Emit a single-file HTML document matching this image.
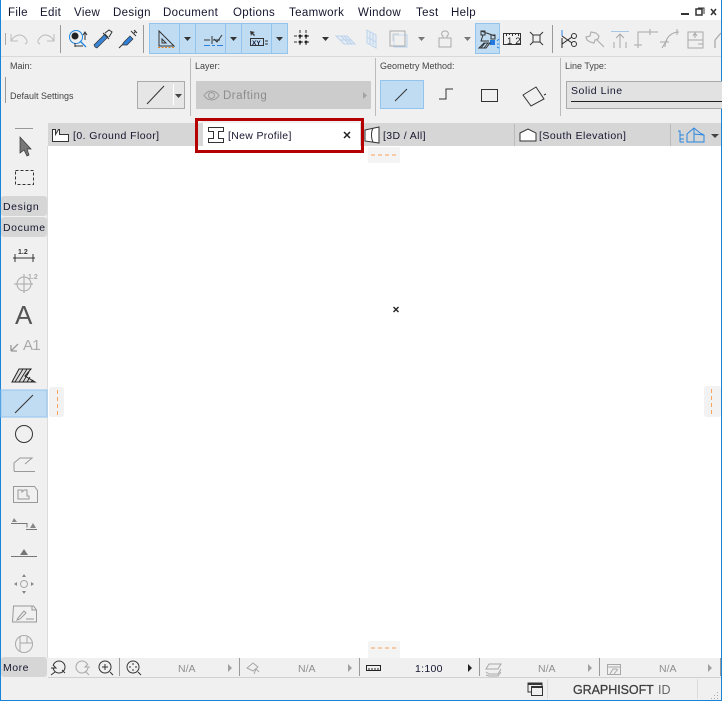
<!DOCTYPE html>
<html><head><meta charset="utf-8"><style>
html,body{margin:0;padding:0;background:#fff}
svg{display:block;position:absolute;left:0;top:0}
text{font-family:"Liberation Sans",sans-serif;font-size:11px;fill:#15152e}
.m{font-size:11.5px;letter-spacing:.35px}
.l{font-size:9px;fill:#444}
.g{fill:#8f8f8f}
.n{stroke:#333;fill:none;stroke-width:1}
.d{stroke:#a8a8a8;fill:none;stroke-width:1}
.b{stroke:#8db8e2;fill:none;stroke-width:1}
.sel{fill:#bfdcf3;stroke:#93c4ee;stroke-width:1}
</style></head><body>
<svg width="722" height="701" viewBox="0 0 722 701" xmlns="http://www.w3.org/2000/svg" shape-rendering="geometricPrecision">
<rect width="722" height="701" fill="#f0f0f0"/>
<rect width="722" height="20" fill="#fff"/>
<rect y="56" width="722" height="1" fill="#d9d9d9"/>
<rect x="48" y="123" width="674" height="23" fill="#d6d6d6"/>
<rect x="48" y="146" width="673" height="512" fill="#fff"/>
<rect x="47" y="146" width="1" height="512" fill="#dcdcdc"/>
<rect x="48" y="677" width="673" height="1" fill="#d0d0d0"/>
<rect x="0" y="0" width="1" height="701" fill="#1883d7"/>
<rect x="721" y="0" width="1" height="701" fill="#1883d7"/>
<rect x="0" y="700" width="722" height="1" fill="#1883d7"/>

<!-- menu -->
<g class="menu">
<text class="m" x="8" y="16">File</text><text class="m" x="40" y="16">Edit</text><text class="m" x="74" y="16">View</text><text class="m" x="113" y="16">Design</text><text class="m" x="163" y="16">Document</text><text class="m" x="233" y="16">Options</text><text class="m" x="289" y="16">Teamwork</text><text class="m" x="358" y="16">Window</text><text class="m" x="416" y="16">Test</text><text class="m" x="451" y="16">Help</text>
</g>
<path d="M681 14h8" stroke="#333" stroke-width="2"/>
<rect x="696" y="9" width="6" height="6" fill="none" stroke="#333" stroke-width="1.500"/><path d="M698 8h6v6" fill="none" stroke="#333"/>
<path d="M711 9l5 6M716 9l-5 6" stroke="#333" stroke-width="1.500"/>

<!-- toolbar -->
<path d="M5.500 33v12" class="d"/>
<path d="M11 34v7h7M11 41c4-7 11-8 15-2 2 3 1 4-1 5" class="d" style="stroke:#bbb"/>
<path d="M54 34v7h-7M54 41c-4-7-11-8-15-2-2 3-1 4 1 5" class="d" style="stroke:#bbb"/>
<rect x="60" y="25" width="1" height="28" fill="#999"/>
<circle cx="75" cy="36" r="3.500" fill="#222"/><circle cx="76" cy="37" r="6.500" fill="none" stroke="#1f86e0"/><path d="M80 41l6 6" stroke="#1f86e0" stroke-width="1.300"/><path d="M85 33v7M83 35l2-3 2 3M75 46h8M75 43v4" class="n"/>
<path d="M95 47l-1-2 11-11 3 3-11 11z" fill="#3a83d4" stroke="#333" stroke-width=".7"/><path d="M105 33l4-3 3 2-3 5M103 33l6 6" class="n"/>
<path d="M122 45l2-3 6-6 3 3-6 6z" fill="#2f7fd6" stroke="#333" stroke-width=".7"/><path d="M119 48l3-3M131 31l5 5M134 30l3 3M136 31l-2 2" class="n"/>
<rect x="143" y="25" width="1" height="28" fill="#999"/>
<rect x="149.500" y="23.500" width="30" height="30" class="sel"/><rect x="179.500" y="23.500" width="16" height="30" class="sel"/>
<rect x="195.500" y="23.500" width="30" height="30" class="sel"/><rect x="225.500" y="23.500" width="16" height="30" class="sel"/>
<rect x="241.500" y="23.500" width="30" height="30" class="sel"/><rect x="271.500" y="23.500" width="16" height="30" class="sel"/>
<path d="M159 31v15h15zM162 39v4h4z" class="n"/><path d="M158 47.500h17" stroke="#e8841f" stroke-dasharray="2 1.500" fill="none"/>
<path d="M204 40h6M213 40h7M212 36v8M214 39l3 3 5-7" class="n"/><path d="M204 45.500h6M212 45.500h3M217 45.500h6" stroke="#2c7fdc" fill="none"/>
<path d="M250 31l5 1-2 1 2 2-1 1-2-2-1 2z" fill="#333"/><rect x="250.500" y="38.500" width="13" height="7" class="n"/><text x="252" y="45" style="font-size:6.500px;font-weight:bold">XY</text><path d="M265 41h3M265 44h3" class="n"/>
<path d="M184 37h7l-3.500 4zM230 37h7l-3.500 4zM276 37h7l-3.500 4zM322 37h7l-3.500 4z" fill="#333"/>
<path d="M300 30v18M294 36h18M294 42h18M306 30v18" stroke="#333" stroke-dasharray="3 3" fill="none"/>
<circle cx="300" cy="36" r="1.500" fill="#222"/><circle cx="306" cy="36" r="1.500" fill="#222"/><circle cx="300" cy="42" r="1.500" fill="#222"/><circle cx="306" cy="42" r="1.500" fill="#222"/>
<path d="M336 36h11l8 8h-11zM341 36l8 8M344 36l8 8M340 40h12" fill="#e6edf5" stroke="#bcd3ec"/>
<path d="M367 30l9 5v13l-9-5zM370 32v12M373 33v12M367 37l9 5" fill="#e6edf5" stroke="#bcd3ec"/>
<rect x="394" y="35" width="13" height="12" fill="none" stroke="#b4d0ef"/>
<rect x="390" y="31" width="15" height="15" fill="#f0f0f0" fill-opacity=".4" stroke="#aaa"/><path d="M393 41v-7h6" stroke="#ccc" fill="none"/>
<path d="M418 37h7l-3.500 4zM464 37h7l-3.500 4z" fill="#777"/>
<path d="M439 38h12v9h-12zM443 38v-2c-2-1-2-5 2-5 4 0 4 4 2 5v2" fill="none" stroke="#aaa"/>
<rect x="475.500" y="23.500" width="24" height="30" class="sel"/>
<path d="M481 31l14 5M481 31h4v4h-4zM491 35h4v4h-4zM483 35l-2 6h8" class="n"/><rect x="490" y="40" width="5" height="5" fill="#2179e0"/><path d="M479 48l5-5h6l-4 5zM481 48l4-5M484 48l4-5" class="n"/><path d="M497 41l2-2M497 44h2M497 47l2 1" stroke="#2d86e0"/>
<path d="M503.500 33.500h17v11h-17zM506.500 33v3M509.500 33v2M512.500 33v3M515.500 33v2M518.500 33v3" class="n"/><text x="507" y="44" style="font-size:9.500px;letter-spacing:3px;fill:#222">12</text>
<path d="M533 35h7v7h-7zM530 32l3 3M543 32l-3 3M530 45l3-3M543 45l-3-3" class="n"/>
<rect x="552" y="25" width="1" height="28" fill="#999"/>
<path d="M562 30v6" stroke="#2d86e0"/><path d="M562 38v10" stroke="#222"/><circle cx="574" cy="36" r="2.500" class="n"/><circle cx="574" cy="44" r="2.500" class="n"/><path d="M562 36l10 7M562 44l10-7" stroke="#222"/>
<path d="M586 37l4-1 1-4 5 1 3 3-1 3-3 1-1 3-4-1-3-2zM596 39l8 8" stroke="#b0b0b0" fill="none" stroke-width="1.200"/>
<path d="M611 31.500h18" stroke="#a9c8e8"/><path d="M620 34v14M616 38l4-4 4 4M614 42v6M626 42v6" class="d"/>
<path d="M638 48v-16h16M634 45h8M650 29v6" class="d"/><path d="M654 32h4" class="d"/>
<path d="M665 47c0-9 6-15 14-15M660 42h9M677 29v6M662 48l5-8" class="d"/>
<rect x="688" y="32" width="15" height="16" class="d"/><path d="M688 40h15M693 36l2-3 2 3M695 33v5M698 44h5" class="d"/>
<path d="M715 40l6-7M715 40v8" stroke="#aaa" stroke-width="1.300" fill="none"/>

<!-- info box -->
<rect x="190" y="58" width="1" height="58" fill="#bbb"/>
<rect x="375" y="58" width="1" height="58" fill="#bbb"/>
<rect x="560" y="58" width="1" height="58" fill="#bbb"/>
<text class="l" x="10" y="69">Main:</text><text class="l" x="195" y="69">Layer:</text><text class="l" x="380" y="69">Geometry Method:</text><text class="l" x="565" y="69">Line Type:</text>
<rect x="5" y="77" width="1" height="26" fill="#999"/>
<text class="l" x="10" y="99">Default Settings</text>
<rect x="137.500" y="81.500" width="47" height="27" fill="#e6e6e6" stroke="#aaa"/><path d="M173.500 84v21" stroke="#fff"/><path d="M147 104l17-18" stroke="#333" fill="none"/><path d="M175 94h7l-3.500 4z" fill="#444"/>
<rect x="196" y="81" width="175" height="28" rx="1" fill="#cccccc"/>
<path d="M204 95.500c4-6 11-6 15 0-4 6-11 6-15 0z" fill="none" stroke="#9a9a9a"/><circle cx="211.500" cy="95.500" r="3" fill="none" stroke="#9a9a9a"/>
<text x="223" y="99" style="font-size:11.500px;letter-spacing:.5px;fill:#8c8c8c">Drafting</text>
<path d="M363 92v7l4-3.500z" fill="#a3a3a3"/>
<rect x="380.500" y="80.500" width="43" height="28" class="sel"/><path d="M395 101l12-12" stroke="#333" fill="none"/>
<path d="M439 99h7v-10h7" class="n"/>
<rect x="481.500" y="89.500" width="16" height="12" class="n"/>
<path d="M523 95l13-8 8 12-13 7zM544 95l2-1" class="n"/>
<rect x="566.500" y="81.500" width="157" height="27" fill="#e2e2e2" stroke="#aaa"/>
<text x="571" y="94" style="font-size:10.500px;letter-spacing:.55px">Solid Line</text><path d="M571 101.500h151" stroke="#222"/>

<!-- tabs -->
<path d="M52.500 129.500h3v5l3-5h1v5h9v7h-16z" fill="#fff" stroke="#333"/>
<text x="73" y="139" style="font-size:10.500px;letter-spacing:.42px">[0. Ground Floor]</text>
<rect x="203" y="123" width="157" height="27" fill="#fff"/>
<rect x="196.500" y="119.500" width="166" height="32" fill="none" stroke="#b40000" stroke-width="3"/>
<path d="M208.500 127.500h15v4h-5v7h5v4h-15v-4h5v-7h-5z" fill="none" stroke="#333" stroke-width="1"/>
<text x="228" y="139" style="font-size:10.500px;letter-spacing:.32px">[New Profile]</text>
<path d="M344 132l6 6M350 132l-6 6" stroke="#222" stroke-width="1.500"/>
<path d="M365 130l14-3v16l-14-2z" fill="#fff" stroke="#333"/><path d="M373 128c-2 4-2 10 0 14" stroke="#333" fill="none"/>
<text x="383" y="139" style="font-size:10.500px;letter-spacing:.38px">[3D / All]</text>
<rect x="514" y="124" width="1" height="22" fill="#bbb"/>
<path d="M520 133l8-4 8 4v8h-16z" fill="#fff" stroke="#333"/>
<text x="539" y="139" style="font-size:10.500px;letter-spacing:.47px">[South Elevation]</text>
<rect x="670" y="124" width="1" height="22" fill="#bbb"/>
<path d="M678 131h2v11M680 135h4M680 139h4M680 142h4" stroke="#2b86e0" fill="none"/><path d="M687 142v-8l7-6 6 5 4 2v7zM694 128v14M694 134l10 1" stroke="#2b86e0" fill="none"/>
<path d="M711 134h8l-4 4z" fill="#444"/>

<!-- edge tabs -->
<rect x="368" y="147" width="32" height="16" rx="2" fill="#f4f4f4"/><path d="M371 155h26" stroke="#f7a45d" stroke-dasharray="4 3"/>
<rect x="368" y="641" width="32" height="17" rx="2" fill="#f4f4f4"/><path d="M371 648h26" stroke="#f7a45d" stroke-dasharray="4 3"/>
<rect x="49" y="387" width="15" height="30" rx="3" fill="#f2f2f2"/><path d="M57.500 390v25" stroke="#f7a45d" stroke-dasharray="4 3"/>
<rect x="704" y="386" width="17" height="31" rx="3" fill="#f2f2f2"/><path d="M711.500 389v25" stroke="#f7a45d" stroke-dasharray="4 3"/>
<path d="M393.500 307l5 5M398.500 307l-5 5" stroke="#222" stroke-width="1.400"/>

<!-- left toolbox -->
<path d="M15 128.500h18" stroke="#999"/>
<path d="M20 138v16l4-3 3 6 2-1-2-6h4z" transform="translate(0,-1)" fill="#777" stroke="#333" stroke-width=".7"/>
<rect x="15.500" y="170.500" width="18" height="14" fill="none" stroke="#333" stroke-dasharray="3 2"/>
<rect x="1" y="196" width="46" height="20" rx="3" fill="#d6d6d6"/>
<rect x="1" y="217" width="46" height="20" rx="3" fill="#d6d6d6"/>
<text x="3" y="210" style="font-size:10.500px;letter-spacing:.6px">Design</text>
<text x="3" y="231" style="font-size:10.500px;letter-spacing:.6px">Docume</text>
<text x="18" y="254" style="font-size:7px;font-weight:bold;fill:#333">1.2</text><path d="M13 258h22M15 254v8M33 254v8" class="n"/>
<circle cx="24" cy="284" r="7" class="d"/><path d="M24 274v19M14 284h19" class="d"/><text x="28" y="279" style="font-size:7px;font-weight:bold;fill:#aaa">1.2</text>
<text x="15" y="324" style="font-size:26px;fill:#555">A</text>
<path d="M11 351l7-7M11 351v-6M11 351h6" stroke="#999" stroke-width="1.300" fill="none"/><text x="23" y="350" style="font-size:15px;letter-spacing:-.8px;fill:#aaa">A1</text>
<path d="M12 382l7-13h12l-6 7 10 6z" fill="#dcdcdc" stroke="#222"/><path d="M15 382l8-13M19 382l8-13M23 382l6-10M27 382l3-5M31 382l2-2" stroke="#222" stroke-width=".9"/>
<rect x="1" y="390" width="46" height="27" class="sel"/><path d="M15 413l18-18" stroke="#333" fill="none"/>
<circle cx="24" cy="434" r="8.500" fill="none" stroke="#333" stroke-width="1"/>
<path d="M14 471.500h21M14 471v-8l6-5h12l-7 6" class="d" style="stroke:#999"/>
<path d="M13.500 486.500h21l3 4v12h-24zM18 490h4v2l2-2h3v6h2v3h-11z" class="d" style="stroke:#999"/>
<path d="M11 523.500h16v4M26 529.500h11" stroke="#777" fill="none"/><path d="M12 522l2-4 3 4zM30 528l3-5 3 5z" fill="#888"/>
<path d="M11 556.500h26" stroke="#777"/><path d="M20 555l4-6 4 6z" fill="#777"/>
<circle cx="24" cy="584" r="3.500" class="d"/><path d="M22 577l2-3 2 3zM22 591l2 3 2-3zM17 582l-3 2 3 2zM31 582l3 2-3 2z" fill="#888"/>
<path d="M13.500 606h20l3 4v12h-24zM18 618l6-7 2 2-6 6-3 1zM26 619h8M32 606v4h4" stroke="#999" fill="none"/>
<circle cx="24" cy="644" r="8.500" class="d"/><path d="M20 636v16M20 643h12M27 637v6" class="d"/>
<rect x="1" y="657" width="46" height="20" rx="3" fill="#d6d6d6"/>
<text x="3" y="671" style="font-size:10.500px;letter-spacing:.5px">More</text>

<!-- nav bar -->
<rect x="48" y="658" width="673" height="19" fill="#f0f0f0"/>
<circle cx="59" cy="667" r="6" class="n"/><path d="M51 668h5l-3-3M55 672l-4 3M62 670l3 3" class="n" style="fill:#f0f0f0"/>
<circle cx="82" cy="667" r="6" class="d"/><path d="M90 667h-5l3-3M85 671l4 4" class="d" style="fill:#f0f0f0"/>
<circle cx="105" cy="667" r="6" class="n"/><path d="M102 667h6M105 664v6M110 672l3 3" class="n"/>
<rect x="119" y="658" width="1" height="18" fill="#999"/><rect x="239" y="658" width="1" height="18" fill="#999"/><rect x="359" y="658" width="1" height="18" fill="#999"/><rect x="479" y="658" width="1" height="18" fill="#999"/><rect x="599" y="658" width="1" height="18" fill="#999"/><rect x="720" y="658" width="1" height="18" fill="#999"/>
<circle cx="133" cy="667" r="6" class="n" stroke-width="1.200"/><path d="M133 663v2M133 669v2M129 667h2M135 667h2M138 672l3 3" class="n"/>
<text x="178" y="672" class="g" style="font-size:10.500px">N/A</text><path d="M228 664v8l4-4z" fill="#a0a0a0"/>
<path d="M247 668l6-5 5 4-5 4zM254 674l2-5 3 3" class="d"/>
<text x="298" y="672" class="g" style="font-size:10.500px">N/A</text><path d="M348 664v8l4-4z" fill="#a0a0a0"/>
<rect x="366.500" y="665.500" width="14" height="5" class="n" style="stroke:#222"/><path d="M369 668v2M372 668v2M375 668v2M378 668v2" stroke="#222"/>
<text x="415" y="672" style="font-size:10.500px;letter-spacing:.3px">1:100</text><path d="M468 664v8l4-4z" fill="#222"/>
<path d="M486 669l3-5h12l-3 5zM486 672l3 2h9l3-5M486 675l3 1h9l3-4" class="d"/>
<text x="538" y="672" class="g" style="font-size:10.500px">N/A</text><path d="M588 664v8l4-4z" fill="#a0a0a0"/>
<rect x="607.500" y="664.500" width="13" height="10" class="d"/><path d="M608 667h12M610 674l3-5h4M614 674l4-5" class="d"/>
<text x="659" y="672" class="g" style="font-size:10.500px">N/A</text><path d="M708 664v8l4-4z" fill="#a0a0a0"/>

<!-- status bar -->
<rect x="528" y="683" width="14" height="9" fill="none" stroke="#333"/><rect x="531.500" y="686.500" width="11" height="9" fill="#f0f0f0" stroke="#333"/><path d="M528 683h14v2h-14zM531 686h12v2h-12z" fill="#333"/>
<rect x="547" y="679" width="1" height="20" fill="#dcdcdc"/><rect x="697" y="679" width="1" height="20" fill="#dcdcdc"/>
<text x="573" y="694" style="font-size:12.500px;fill:#3c3c3c;stroke:#3c3c3c;stroke-width:.25;letter-spacing:-.05px">GRAPHISOFT</text>
<text x="658" y="694" style="font-size:12.500px;fill:#666">ID</text>
<path d="M717 692h1v1h-1zM714 695h1v1h-1zM717 695h1v1h-1zM711 698h1v1h-1zM714 698h1v1h-1zM717 698h1v1h-1z" fill="#aaa"/>
</svg>
</body></html>
